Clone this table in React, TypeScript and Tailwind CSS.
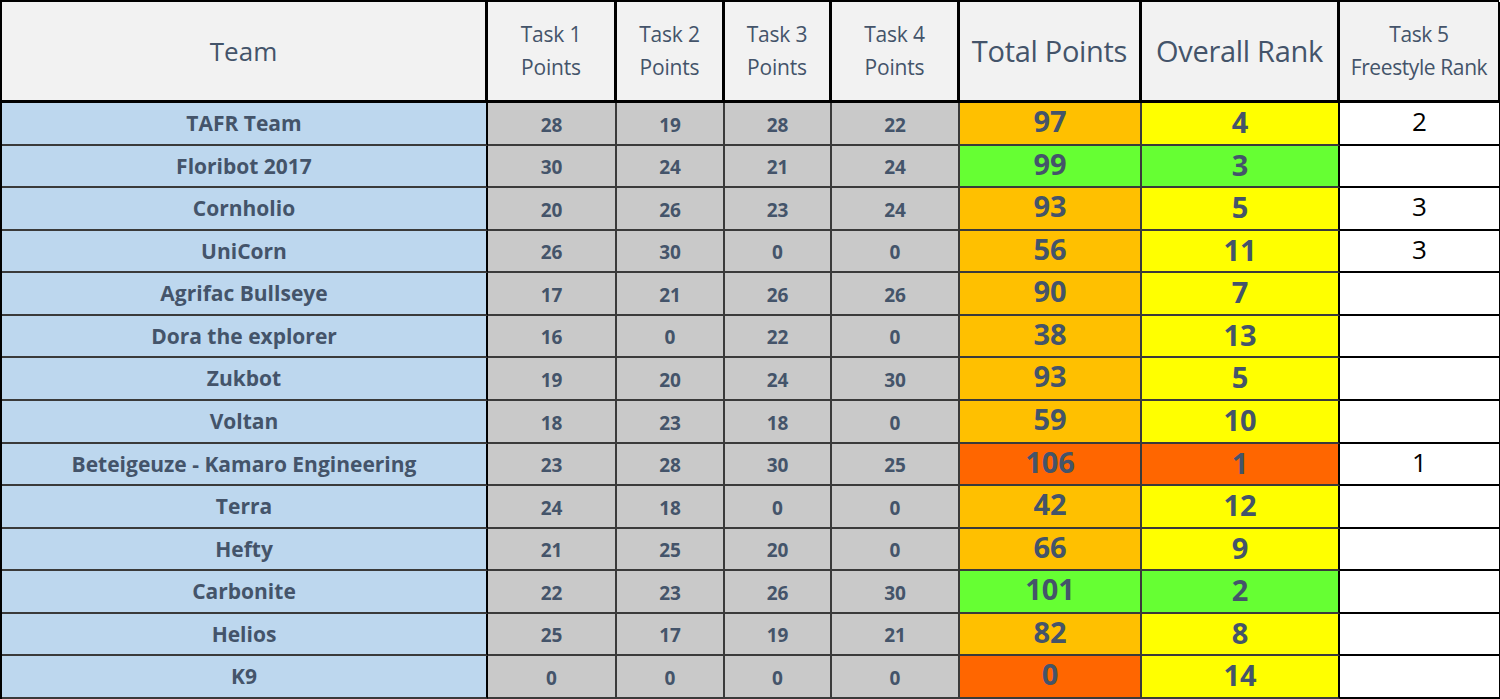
type Row = {
  team: string;
  tasks: number[];
  total: number;
  rank: number;
  freestyle?: number;
};

const rows: Row[] = [
  { team: 'TAFR Team', tasks: [28, 19, 28, 22], total: 97, rank: 4, freestyle: 2 },
  { team: 'Floribot 2017', tasks: [30, 24, 21, 24], total: 99, rank: 3 },
  { team: 'Cornholio', tasks: [20, 26, 23, 24], total: 93, rank: 5, freestyle: 3 },
  { team: 'UniCorn', tasks: [26, 30, 0, 0], total: 56, rank: 11, freestyle: 3 },
  { team: 'Agrifac Bullseye', tasks: [17, 21, 26, 26], total: 90, rank: 7 },
  { team: 'Dora the explorer', tasks: [16, 0, 22, 0], total: 38, rank: 13 },
  { team: 'Zukbot', tasks: [19, 20, 24, 30], total: 93, rank: 5 },
  { team: 'Voltan', tasks: [18, 23, 18, 0], total: 59, rank: 10 },
  { team: 'Beteigeuze - Kamaro Engineering', tasks: [23, 28, 30, 25], total: 106, rank: 1, freestyle: 1 },
  { team: 'Terra', tasks: [24, 18, 0, 0], total: 42, rank: 12 },
  { team: 'Hefty', tasks: [21, 25, 20, 0], total: 66, rank: 9 },
  { team: 'Carbonite', tasks: [22, 23, 26, 30], total: 101, rank: 2 },
  { team: 'Helios', tasks: [25, 17, 19, 21], total: 82, rank: 8 },
  { team: 'K9', tasks: [0, 0, 0, 0], total: 0, rank: 14 },
];

// conditional colours as in the spreadsheet
const totalBg = (r: Row) => {
  if (r.rank === 1 || r.total === 0) return 'bg-[#ff6600]';
  if (r.rank === 2 || r.rank === 3) return 'bg-[#66ff33]';
  return 'bg-[#ffc000]';
};

const rankBg = (r: Row) => {
  if (r.rank === 1) return 'bg-[#ff6600]';
  if (r.rank === 2 || r.rank === 3) return 'bg-[#66ff33]';
  return 'bg-[#ffff00]';
};

const head = 'flex items-center justify-center text-center bg-[#f2f2f2] text-[#44546a] border-r-[3px] border-b-[3px] border-black';
const cell = 'flex items-center justify-center border-r-2 border-b-2 border-[#3a3a3a] font-bold text-[#44546a]';

export default function App() {
  return (
    <div className="w-[1500px] h-[699px] bg-white font-['Open_Sans',sans-serif]">
      <div className="grid w-[1499px] h-[699px] grid-cols-[486px_129px_108px_107px_128px_182px_198px_161px] grid-rows-[101px_repeat(14,minmax(0,1fr))] border-l-2 border-t-2 border-black">
        <div className={`${head} text-[26px]`}>Team</div>
        {[1, 2, 3, 4].map((n) => (
          <div key={n} className={`${head} text-[21px] leading-[33px] tracking-[-0.2px]`}>
            <div>
              Task {n}
              <br />
              Points
            </div>
          </div>
        ))}
        <div className={`${head} text-[29px] tracking-[-0.3px]`}>Total Points</div>
        <div className={`${head} text-[29px] tracking-[-0.3px]`}>Overall Rank</div>
        <div className={`${head} text-[21px] leading-[33px] tracking-[-0.4px]`}>
          <div>
            Task 5
            <br />
            Freestyle Rank
          </div>
        </div>

        {rows.map((r) => (
          <div key={r.team} className="contents">
            <div className={`${cell} bg-[#bdd7ee] border-r-black text-[21px] pt-[1px]`}>{r.team}</div>
            {r.tasks.map((t, i) => (
              <div key={i} className={`${cell} bg-[#c9c9c9] text-[19px] pt-[3px]`}>
                {t}
              </div>
            ))}
            <div className={`${cell} ${totalBg(r)} text-[29px] pb-[5px]`}>{r.total}</div>
            <div className={`${cell} ${rankBg(r)} text-[29px] pb-[3px] border-r-black`}>{r.rank}</div>
            <div className="flex items-center justify-center bg-white border-r-2 border-b-2 border-black text-black text-[26px] pb-[3px]">
              {r.freestyle ?? ''}
            </div>
          </div>
        ))}
      </div>
    </div>
  );
}
